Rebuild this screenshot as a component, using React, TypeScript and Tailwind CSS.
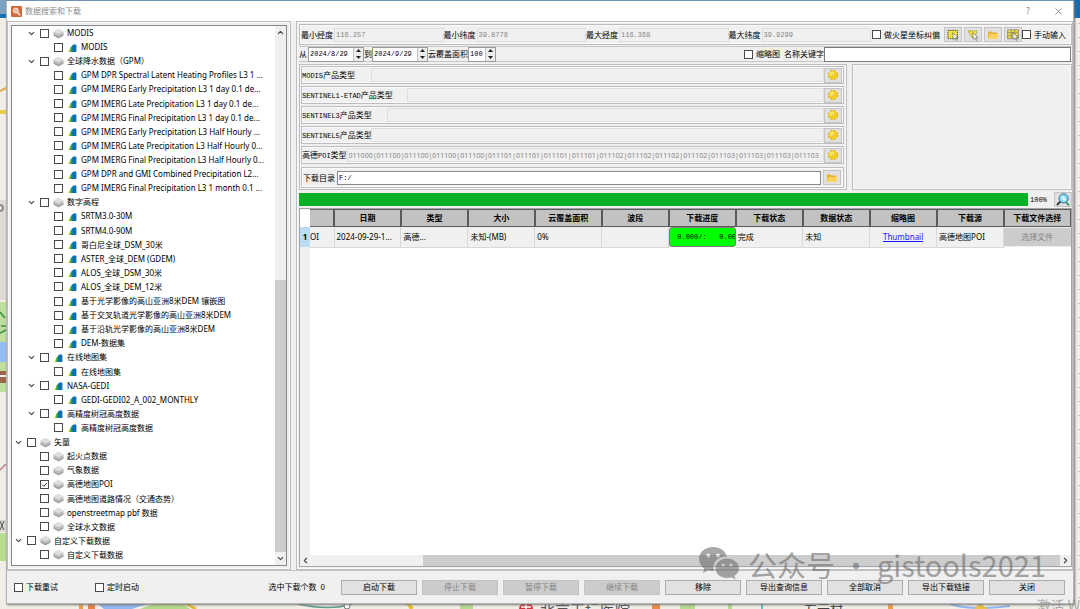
import React from "react";
import { ChevronDown, ChevronLeft, ChevronRight, ChevronUp, X } from "lucide-react";

type IconKind = "layers" | "raster";

interface TreeNode {
  label: string;
  depth: 0 | 1 | 2;
  icon: IconKind;
  open?: boolean;
  checked?: boolean;
}

const treeNodes: TreeNode[] = [
  { label: "MODIS", depth: 1, icon: "layers", open: true },
  { label: "MODIS", depth: 2, icon: "raster" },
  { label: "全球降水数据（GPM）", depth: 1, icon: "layers", open: true },
  { label: "GPM DPR Spectral Latent Heating Profiles L3 1 ...", depth: 2, icon: "raster" },
  { label: "GPM IMERG Early Precipitation L3 1 day 0.1 de...", depth: 2, icon: "raster" },
  { label: "GPM IMERG Late Precipitation L3 1 day 0.1 de...", depth: 2, icon: "raster" },
  { label: "GPM IMERG Final Precipitation L3 1 day 0.1 de...", depth: 2, icon: "raster" },
  { label: "GPM IMERG Early Precipitation L3 Half Hourly ...", depth: 2, icon: "raster" },
  { label: "GPM IMERG Late Precipitation L3 Half Hourly 0...", depth: 2, icon: "raster" },
  { label: "GPM IMERG Final Precipitation L3 Half Hourly 0...", depth: 2, icon: "raster" },
  { label: "GPM DPR and GMI Combined Precipitation L2...", depth: 2, icon: "raster" },
  { label: "GPM IMERG Final Precipitation L3 1 month 0.1 ...", depth: 2, icon: "raster" },
  { label: "数字高程", depth: 1, icon: "layers", open: true },
  { label: "SRTM3.0-30M", depth: 2, icon: "raster" },
  { label: "SRTM4.0-90M", depth: 2, icon: "raster" },
  { label: "哥白尼全球_DSM_30米", depth: 2, icon: "raster" },
  { label: "ASTER_全球_DEM (GDEM)", depth: 2, icon: "raster" },
  { label: "ALOS_全球_DSM_30米", depth: 2, icon: "raster" },
  { label: "ALOS_全球_DEM_12米", depth: 2, icon: "raster" },
  { label: "基于光学影像的高山亚洲8米DEM 镶嵌图", depth: 2, icon: "raster" },
  { label: "基于交叉轨道光学影像的高山亚洲8米DEM", depth: 2, icon: "raster" },
  { label: "基于沿轨光学影像的高山亚洲8米DEM", depth: 2, icon: "raster" },
  { label: "DEM-数据集", depth: 2, icon: "raster" },
  { label: "在线地图集", depth: 1, icon: "raster", open: true },
  { label: "在线地图集", depth: 2, icon: "raster" },
  { label: "NASA-GEDI", depth: 1, icon: "raster", open: true },
  { label: "GEDI-GEDI02_A_002_MONTHLY", depth: 2, icon: "raster" },
  { label: "高精度树冠高度数据", depth: 1, icon: "raster", open: true },
  { label: "高精度树冠高度数据", depth: 2, icon: "raster" },
  { label: "矢量", depth: 0, icon: "layers", open: true },
  { label: "起火点数据", depth: 1, icon: "layers" },
  { label: "气象数据", depth: 1, icon: "layers" },
  { label: "高德地图POI", depth: 1, icon: "layers", checked: true },
  { label: "高德地图道路情况（交通态势）", depth: 1, icon: "layers" },
  { label: "openstreetmap pbf 数据", depth: 1, icon: "layers" },
  { label: "全球水文数据", depth: 1, icon: "layers" },
  { label: "自定义下载数据", depth: 0, icon: "layers", open: true },
  { label: "自定义下载数据", depth: 1, icon: "layers" },
];

const indent = { 0: "pl-0", 1: "pl-[13px]", 2: "pl-[27px]" };

const bounds = [
  { id: "min-lon", label: "最小经度", value: "116.257" },
  { id: "min-lat", label: "最小纬度", value: "39.8778" },
  { id: "max-lon", label: "最大经度", value: "116.368" },
  { id: "max-lat", label: "最大纬度", value: "39.9299" },
];

const poiCodes =
  "011000|011100|011100|011100|011100|011101|011101|011101|011101|011102|011102|011102|011102|011103|011103|011103|011103";

const productTypes = [
  { id: "modis", latin: "MODIS", label: "产品类型", width: "w-[69px]" },
  { id: "s1", latin: "SENTINEL1-ETAD", label: "产品类型", width: "w-[105px]" },
  { id: "s3", latin: "SENTINEL3", label: "产品类型", width: "w-[85px]" },
  { id: "s5", latin: "SENTINEL5", label: "产品类型", width: "w-[69px]" },
];

const columns = ["日期", "类型", "大小", "云覆盖面积", "波段", "下载进度", "下载状态", "数据状态", "缩略图", "下载源", "下载文件选择"];

const actions = [
  { label: "启动下载" },
  { label: "停止下载", disabled: true },
  { label: "暂停下载", disabled: true },
  { label: "继续下载", disabled: true },
  { label: "移除" },
  { label: "导出查询信息" },
  { label: "全部取消" },
  { label: "导出下载链接" },
  { label: "关闭" },
];

const frame = "border border-[#bdbdbd] shadow-[inset_0_0_0_1px_#fafafa]";
const readonlyField =
  "h-[14px] min-w-0 flex-1 border border-[#dedede] bg-[#f0f0f0] px-px text-[7px] text-[#858585] outline-none";
const latinMono = "font-['Liberation_Mono',monospace] text-[7px]";
const toolButton =
  "flex h-[15px] w-[18px] shrink-0 items-center justify-center border border-[#c4c4c4] bg-[#e1e1e1]";

function CheckBox({ checked }: { checked?: boolean }) {
  return (
    <span className="relative flex h-[9px] w-[9px] shrink-0">
      <input
        type="checkbox"
        defaultChecked={checked}
        className="peer h-[9px] w-[9px] appearance-none border border-[#4a4a4a] bg-white"
      />
      <svg
        viewBox="0 0 9 9"
        className="pointer-events-none absolute inset-0 hidden h-[9px] w-[9px] peer-checked:block"
      >
        <path d="M2 4.5 L3.8 6.3 L7 2.8" fill="none" stroke="#333" strokeWidth="1" />
      </svg>
    </span>
  );
}

function LayersIcon() {
  return (
    <svg viewBox="0 0 11 11" className="h-[11px] w-[11px] shrink-0">
      <path d="M0.5 5.4 L5.5 8 L10.5 5.4 V7.8 L5.5 10.6 L0.5 7.8Z" fill="#a4a4a4" />
      <path d="M0.5 3.4 L5.5 6 L10.5 3.4 V5.6 L5.5 8.4 L0.5 5.6Z" fill="#bdbdbd" />
      <path d="M0.5 3.3 L5.5 0.8 L10.5 3.3 L5.5 6.2Z" fill="#dedede" />
    </svg>
  );
}

function RasterIcon() {
  return (
    <svg viewBox="0 0 9 9" className="h-[9px] w-[9px] shrink-0">
      <path d="M0 9 L2.6 4.4 L3.2 9Z" fill="#ece034" />
      <path d="M1.6 9 L2.4 4.8 L4.2 2.4 L5 9Z" fill="#4cac46" />
      <path d="M3.4 9 L3.8 3 L5.4 2 L5.6 9Z" fill="#128a82" />
      <path d="M4.6 9 V2.2 L5.4 1.4 H8 L8.4 2.4 V9Z" fill="#0a6fb5" />
    </svg>
  );
}

function GearIcon() {
  return (
    <svg viewBox="0 0 12 12" className="h-[12px] w-[12px]">
      <circle cx="6" cy="6" r="4.6" fill="none" stroke="#dcb018" strokeWidth="1.3" strokeDasharray="2.2 1.4" />
      <circle cx="6" cy="6" r="4.3" fill="#f2cb1c" />
      <circle cx="5" cy="4.8" r="2.4" fill="#fbe660" />
      <circle cx="6" cy="6" r="1" fill="#fff6c0" stroke="#dcae10" strokeWidth="0.5" />
    </svg>
  );
}

function FolderIcon() {
  return (
    <svg viewBox="0 0 12 10" className="h-[10px] w-[12px]">
      <path d="M1 9 V1.5 H4.5 L5.5 2.6 H10 V9Z" fill="#e8b22c" />
      <path d="M1 9 L2.6 4 H11.6 L10.2 9Z" fill="#ffd45a" />
    </svg>
  );
}

function Cursor() {
  return (
    <path
      d="M6 4 L12 9 L9.6 9.4 L11 12 L9.8 12.4 L8.6 9.9 L6.8 11.2Z"
      fill="#f5f5f5"
      stroke="#555"
      strokeWidth="0.6"
    />
  );
}

function RectSelectIcon() {
  return (
    <svg viewBox="0 0 13 13" className="h-[12px] w-[12px]">
      <rect x="1" y="1.5" width="10.5" height="9" fill="#efe03a" stroke="#333" strokeDasharray="1.4 1" />
      <Cursor />
    </svg>
  );
}

function PolygonSelectIcon() {
  return (
    <svg viewBox="0 0 13 13" className="h-[12px] w-[12px]">
      <path d="M1 2 H11 L9 9 H5Z" fill="#efe03a" stroke="#8a8240" strokeWidth="0.8" strokeDasharray="1.4 0.8" />
      <Cursor />
    </svg>
  );
}

function GridSelectIcon() {
  return (
    <svg viewBox="0 0 13 13" className="h-[12px] w-[12px]">
      <rect x="0.8" y="1" width="11.4" height="9.6" fill="#efe03a" stroke="#777" strokeWidth="0.8" />
      <path d="M4.5 1 V10.6 M8.4 1 V10.6 M1 4 H12 M1 7.4 H12" stroke="#777" strokeWidth="0.7" />
      <Cursor />
    </svg>
  );
}

function SearchGlobeIcon() {
  return (
    <svg viewBox="0 0 14 13" className="h-[13px] w-[14px]">
      <circle cx="7.6" cy="5.4" r="4.6" fill="#7fdcf2" stroke="#3f6fa0" />
      <path d="M5 4 Q7 2 8.5 4 T10 7 Q8 9 6.4 7Z" fill="#d8f7ff" />
      <path d="M4.2 8.6 L1 12" stroke="#333" strokeWidth="2" />
      <path d="M10 9 L13 12.4" stroke="#2c8a5a" strokeWidth="1.6" />
    </svg>
  );
}

function SpinBox({ id, value, width }: { id: string; value: string; width: string }) {
  return (
    <span className={`flex h-[15px] border border-[#9b9b9b] bg-white ${width}`}>
      <input
        id={id}
        defaultValue={value}
        className={`min-w-0 flex-1 bg-white px-px text-black outline-none ${latinMono}`}
      />
      <span className="flex w-[10px] shrink-0 flex-col border-l border-[#c4c4c4] bg-[#ececec]">
        <button type="button" aria-label="增加" className="flex flex-1 items-center justify-center">
          <svg viewBox="0 0 5 3" className="h-[3px] w-[5px]">
            <path d="M0 3 L2.5 0 L5 3Z" fill="#222" />
          </svg>
        </button>
        <button type="button" aria-label="减少" className="flex flex-1 items-center justify-center">
          <svg viewBox="0 0 5 3" className="h-[3px] w-[5px]">
            <path d="M0 0 L2.5 3 L5 0Z" fill="#222" />
          </svg>
        </button>
      </span>
    </span>
  );
}

// Map canvas that shows around the edges of the dialog
function MapBackdrop() {
  return (
    <svg viewBox="0 0 1080 609" preserveAspectRatio="none" aria-hidden="true" className="absolute inset-0 h-full w-full">
      <rect width="1080" height="609" fill="#f1eee8" />
      <rect width="1080" height="3" fill="#6f96b6" />
      <rect width="6" height="18" fill="#7ea3c0" />
      <rect y="14" width="6" height="4" fill="#1473b8" />
      <path d="M0 91 L6 88" stroke="#e6a84a" strokeWidth="2" />
      <rect y="110" width="6" height="4" fill="#e8cc50" />
      <rect y="200" width="6" height="100" fill="#dedbd4" />
      <circle cx="0" cy="208" r="3" fill="none" stroke="#777" strokeWidth="1.5" />
      <rect y="302" width="6" height="90" fill="#bfe09c" />
      <path d="M0 312 L5 318 M1 326 H6 M0 333 L6 330" stroke="#3c8a48" strokeWidth="1.5" />
      <rect y="342" width="6" height="20" fill="#93bdf5" />
      <rect y="371" width="6" height="12" fill="#9a6548" />
      <path d="M0 376 H6" stroke="#f5f0e8" strokeWidth="2" />
      <path d="M0 470 L6 464" stroke="#b77a85" strokeWidth="1.5" />
      <rect y="520" width="6" height="12" fill="#d8d8d0" />
      <path d="M0 521 L4 530 M4 521 L0 530" stroke="#555" strokeWidth="1" />
      <rect y="533" width="6" height="28" fill="#b9dc92" />
      <rect x="1074" width="6" height="18" fill="#0f6db4" />
      <path d="M1079 23 V600" stroke="#9c9c9c" strokeWidth="1" strokeDasharray="1 13" />
      <rect x="79" y="603" width="4" height="6" fill="#e9a24c" />
      <rect x="88" y="603" width="7" height="6" fill="#e8824a" />
      <path d="M97 603 H150 L132 609 H104Z" fill="#8fb8f2" />
      <path d="M140 609 L156 603 H182 L190 609Z" fill="#b2d98a" />
      <path d="M185 603 L196 609" stroke="#e3ba3c" strokeWidth="3" />
      <path d="M298 604 Q330 611 352 604" fill="none" stroke="#5d9c88" strokeWidth="1.5" />
      <circle cx="347" cy="606" r="3" fill="#fff" stroke="#777" />
      <path d="M408 603 L412 609" stroke="#e5c130" strokeWidth="4" />
      <rect x="460" y="603" width="13" height="6" fill="#b5da90" />
      <circle cx="526" cy="609" r="7" fill="#d6303c" />
      <path d="M521 607 H531 M526 604 V609" stroke="#fff" strokeWidth="1.5" />
      <text x="540" y="616" fontSize="15" fill="#555">北京天坛医院</text>
      <rect x="652" y="603" width="8" height="6" fill="#ec8a4a" />
      <rect x="680" y="603" width="15" height="6" fill="#b5da90" />
      <rect x="728" y="603" width="4" height="6" fill="#b5da90" />
      <path d="M762 603 V609" stroke="#2bb5a5" strokeWidth="1.5" />
      <text x="804" y="614" fontSize="13" fill="#444">方元村</text>
      <rect x="888" y="603" width="5" height="6" fill="#e9a24c" />
      <path d="M950 604 Q970 611 1010 606" fill="none" stroke="#8fb8f2" strokeWidth="2" />
      <path d="M974 609 L980 603 L988 609Z" fill="#e8c24a" />
    </svg>
  );
}

function Watermark() {
  return (
    <div className="pointer-events-none absolute right-[34px] bottom-[27px] flex items-center gap-2 text-[#6e6e6e] opacity-60">
      <svg viewBox="0 0 42 36" className="h-[36px] w-[42px]">
        <path
          fillRule="evenodd"
          fill="currentColor"
          d="M15 1 C7 1 1 6.5 1 13 C1 17 3 20.2 6.2 22.4 L5 27 L10.2 24.3 C12 24.9 14 25.2 16 25 C13.5 16.5 20 10.5 28.8 10.5 C27.5 5 22 1 15 1Z M10.3 7.6 A1.9 1.9 0 1 0 10.31 7.6Z M20 7.6 A1.9 1.9 0 1 0 20.01 7.6Z"
        />
        <path
          fillRule="evenodd"
          fill="currentColor"
          d="M29 12.5 C22.3 12.5 17.5 17 17.5 22.2 C17.5 27.6 22.5 32 29 32 C30.6 32 32 31.7 33.4 31.3 L37.6 33.6 L36.5 29.8 C39.3 28 41 25.3 41 22.2 C41 17 35.8 12.5 29 12.5Z M25.2 17.6 A1.6 1.6 0 1 0 25.21 17.6Z M33 17.6 A1.6 1.6 0 1 0 33.01 17.6Z"
        />
      </svg>
      <span className="text-[29px] leading-[36px] whitespace-pre">公众号 · gistools2021</span>
    </div>
  );
}

function DatasetTree() {
  return (
    <aside className={`flex w-[284px] shrink-0 p-[3px] ${frame}`}>
      <div className="flex min-w-0 flex-1 border border-[#828790] bg-white">
        <ul className="grid min-w-0 flex-1 auto-rows-fr overflow-hidden pb-[3px]">
          {treeNodes.map((node, i) => (
            <li key={i} className={`flex min-h-[14px] items-center ${indent[node.depth]}`}>
              {node.open ? (
                <button
                  type="button"
                  aria-label={`折叠 ${node.label}`}
                  className="mr-[3px] flex w-[12px] shrink-0 justify-center"
                >
                  <ChevronDown size={9} strokeWidth={3} color="#444" />
                </button>
              ) : (
                <span className="mr-[3px] w-[12px] shrink-0" />
              )}
              <label className="flex min-w-0 items-center whitespace-nowrap">
                <CheckBox checked={node.checked} />
                <span className="mx-[3px] flex w-[12px] shrink-0 justify-center">
                  {node.icon === "layers" ? <LayersIcon /> : <RasterIcon />}
                </span>
                {node.label}
              </label>
            </li>
          ))}
        </ul>
        <div className="flex w-[11px] shrink-0 flex-col items-center bg-[#f0f0f0]">
          <button type="button" aria-label="向上滚动" className="flex h-[13px] items-center">
            <ChevronUp size={9} strokeWidth={3} color="#444" />
          </button>
          <div className="flex w-full flex-1 flex-col justify-end">
            <div className="h-[53%] bg-[#cdcdcd]" />
          </div>
          <button type="button" aria-label="向下滚动" className="flex h-[13px] items-center">
            <ChevronDown size={9} strokeWidth={3} color="#444" />
          </button>
        </div>
      </div>
    </aside>
  );
}

function BoundsRow() {
  return (
    <div className={`flex h-[21px] items-center px-px ${frame}`}>
      {bounds.map((b) => (
        <div key={b.id} className="flex min-w-0 flex-1 items-center">
          <label htmlFor={b.id} className="mr-px shrink-0">{b.label}</label>
          <input id={b.id} readOnly value={b.value} className={`${readonlyField} ${latinMono}`} />
        </div>
      ))}
      <label className="flex shrink-0 items-center gap-[3px] pl-px">
        <CheckBox />
        做火星坐标纠偏
      </label>
      <div className="ml-1 flex shrink-0 gap-[2px]">
        <button type="button" aria-label="矩形选择" className={toolButton}><RectSelectIcon /></button>
        <button type="button" aria-label="多边形选择" className={toolButton}><PolygonSelectIcon /></button>
        <button type="button" aria-label="打开文件" className={toolButton}><FolderIcon /></button>
        <button type="button" aria-label="格网选择" className={toolButton}><GridSelectIcon /></button>
      </div>
      <label className="flex shrink-0 items-center gap-[3px] pr-1">
        <CheckBox />
        手动输入
      </label>
    </div>
  );
}

function FilterRow() {
  return (
    <div className="mt-px flex h-[16px] items-center border-y border-[#c6c6c6]">
      <label htmlFor="date-from" className="w-[9px]">从</label>
      <SpinBox id="date-from" value="2024/8/29" width="w-[56px]" />
      <label htmlFor="date-to">到</label>
      <SpinBox id="date-to" value="2024/9/29" width="w-[56px]" />
      <label htmlFor="cloud">云覆盖面积</label>
      <SpinBox id="cloud" value="100" width="w-[28px]" />
      <label className="ml-auto flex items-center gap-[3px]">
        <CheckBox />
        缩略图
      </label>
      <label htmlFor="keyword" className="ml-1">名称关键字</label>
      <input
        id="keyword"
        className="mr-px h-[15px] w-[247px] border border-[#7a7a7a] bg-white px-px outline-none"
      />
    </div>
  );
}

function ProductPanel() {
  return (
    <div className="mt-[2px] flex gap-[5px]">
      <div className={`flex min-w-0 flex-1 flex-col gap-[2px] py-px pr-[2px] pl-px ${frame}`}>
        {productTypes.map((p) => (
          <div key={p.id} className={`flex h-[18px] items-center pr-px ${frame}`}>
            <label htmlFor={p.id} className={`shrink-0 whitespace-nowrap ${p.width}`}>
              <span className={latinMono}>{p.latin}</span>
              {p.label}
            </label>
            <input id={p.id} readOnly value="" className={readonlyField} />
            <button type="button" aria-label={`${p.latin}设置`} className={toolButton}><GearIcon /></button>
          </div>
        ))}
        <div className={`flex h-[18px] items-center pr-px ${frame}`}>
          <label htmlFor="poi" className="shrink-0 whitespace-nowrap">
            高德<span className={latinMono}>POI</span>类型
          </label>
          <input id="poi" readOnly value={poiCodes} className={`${readonlyField} font-['Noto_Sans',sans-serif]`} />
          <button type="button" aria-label="高德POI设置" className={toolButton}><GearIcon /></button>
        </div>
        <div className={`mt-px flex h-[21px] items-center pr-[2px] pl-px ${frame}`}>
          <label htmlFor="dir" className="mr-[2px] shrink-0">下载目录</label>
          <input
            id="dir"
            defaultValue="F:/"
            className={`mr-[2px] h-[14px] min-w-0 flex-1 border border-[#8a8a8a] bg-white px-px outline-none ${latinMono}`}
          />
          <button type="button" aria-label="选择目录" className={toolButton}><FolderIcon /></button>
        </div>
      </div>
      <div className={`w-[220px] shrink-0 ${frame}`} />
    </div>
  );
}

function DownloadTable() {
  const cell = "h-[20px] overflow-hidden border-r border-b border-[#d8d8d8] px-[2px] whitespace-nowrap";
  return (
    <div className="flex min-h-0 flex-1 flex-col border border-[#a0a4ab] bg-white font-['Noto_Sans','Noto_Sans_CJK_SC',sans-serif]">
      <div className="flex flex-1 flex-col bg-[linear-gradient(to_right,#f0f0f0_10px,#fff_10px)]">
        <table className="w-full table-fixed border-collapse">
          <colgroup>
            <col className="w-[10px]" />
            <col className="w-[24px]" />
            {columns.map((c) => (
              <col key={c} />
            ))}
          </colgroup>
          <thead>
            <tr className="h-[17px]">
              <td className="bg-white" />
              <th className="border border-l-0 border-[#6a6a6a] bg-[#c2c2c2]" />
              {columns.map((c) => (
                <th
                  key={c}
                  className="border border-l-2 border-[#5a5a5a] bg-[#c2c2c2] text-center font-bold whitespace-nowrap"
                >
                  {c}
                </th>
              ))}
            </tr>
          </thead>
          <tbody>
            <tr className="h-[20px] bg-[#f0f0f0]">
              <th className="bg-[#bcdcf4] text-center font-bold">1</th>
              <td className="overflow-hidden border-r border-b border-[#d8d8d8] whitespace-nowrap">OI</td>
              <td className={cell}>2024-09-29-1...</td>
              <td className={cell}>高德...</td>
              <td className={cell}>未知-(MB)</td>
              <td className={cell}>0%</td>
              <td className={cell} />
              <td className="p-0">
                <div className="h-[20px] overflow-hidden rounded-[3px] border border-[#7f7f7f] bg-[#00ff00] pl-[7px] whitespace-pre">
                  <span className={`leading-[18px] ${latinMono}`}>{"0.000/:   0.000"}</span>
                </div>
              </td>
              <td className={cell}>完成</td>
              <td className={cell}>未知</td>
              <td className={`${cell} text-center`}>
                <a href="#thumbnail" className="text-[#1a1aff] underline">Thumbnail</a>
              </td>
              <td className={cell}>高德地图POI</td>
              <td className="p-0">
                <button type="button" disabled className="h-[18px] w-full bg-[#cccccc] text-[#858585]">
                  选择文件
                </button>
              </td>
            </tr>
          </tbody>
        </table>
      </div>
      <div className="flex h-[11px] items-center bg-[#f0f0f0]">
        <button type="button" aria-label="向左滚动" className="flex w-[11px] justify-center">
          <ChevronLeft size={9} strokeWidth={3} color="#444" />
        </button>
        <div className="flex h-full flex-1 justify-end">
          <div className="h-full w-[85%] bg-[#cdcdcd]" />
        </div>
        <button type="button" aria-label="向右滚动" className="flex w-[11px] justify-center">
          <ChevronRight size={9} strokeWidth={3} color="#444" />
        </button>
      </div>
    </div>
  );
}

export default function App() {
  return (
    <div className="relative flex min-h-screen overflow-hidden px-[6px] pt-px pb-[5px] font-['Noto_Sans_CJK_SC',sans-serif] text-[8px] leading-[12px] text-black">
      <MapBackdrop />
      <div className="relative flex min-w-0 flex-1 flex-col border-x border-b border-[#b5b5b5] bg-[#f0f0f0] shadow-[1px_1px_2px_#777]">
        <header className="flex h-[20px] shrink-0 items-center bg-white pl-1">
          <svg viewBox="0 0 11 11" className="h-[11px] w-[11px]">
            <rect width="11" height="11" rx="1" fill="#cf6a3a" />
            <circle cx="4.8" cy="4.6" r="2.5" fill="#f3b894" stroke="#ffe9db" strokeWidth="1" />
            <path d="M6.6 6.6 L9.2 9.2" stroke="#ffe9db" strokeWidth="1.5" />
          </svg>
          <h1 className="ml-[3px] flex-1 text-[#8d8d8d]">数据搜索和下载</h1>
          <button type="button" aria-label="帮助" className="w-[30px] text-[9px] text-[#8a8a8a]">?</button>
          <button type="button" aria-label="关闭窗口" className="flex w-[30px] justify-center">
            <X size={11} strokeWidth={2} color="#8a8a8a" />
          </button>
        </header>

        <main className="flex min-h-0 flex-1 gap-[5px]">
          <div className="flex font-['Noto_Sans','Noto_Sans_CJK_SC',sans-serif]">
            <DatasetTree />
          </div>
          <section className={`flex min-w-0 flex-1 flex-col py-[2px] pl-[2px] ${frame}`}>
            <BoundsRow />
            <FilterRow />
            <ProductPanel />
            <div className="mt-[2px] mb-px flex h-[15px] items-center">
              <div role="progressbar" aria-valuenow={100} aria-label="查询进度" className="h-[13px] flex-1 bg-[#06b025]" />
              <span className={`w-[26px] pl-[2px] ${latinMono}`}>100%</span>
              <button type="button" aria-label="查询" className={toolButton}><SearchGlobeIcon /></button>
            </div>
            <DownloadTable />
          </section>
        </main>

        <footer className="flex h-[33px] shrink-0 items-center border-t border-[#c4c4c4] pr-[8px] pl-[7px]">
          <label className="flex w-[81px] items-center gap-[3px]">
            <CheckBox />
            下载重试
          </label>
          <label className="flex items-center gap-[3px]">
            <CheckBox />
            定时启动
          </label>
          <div className="mr-[16px] ml-auto flex gap-1">
            <span>选中下载个数</span>
            <span>0</span>
          </div>
          <div className="flex gap-[5px]">
            {actions.map((a) => (
              <button
                key={a.label}
                type="button"
                disabled={a.disabled}
                className="h-[15px] w-[76px] border border-[#adadad] bg-[#e1e1e1] leading-[12px] disabled:border-[#c4c4c4] disabled:bg-[#cccccc] disabled:text-[#838383]"
              >
                {a.label}
              </button>
            ))}
          </div>
        </footer>
      </div>
      <Watermark />
      <span className="absolute right-0 bottom-0 h-[13px] overflow-hidden text-[14px] leading-[18px] whitespace-nowrap text-[#8c8c8c] opacity-70">
        激活 W
      </span>
    </div>
  );
}
